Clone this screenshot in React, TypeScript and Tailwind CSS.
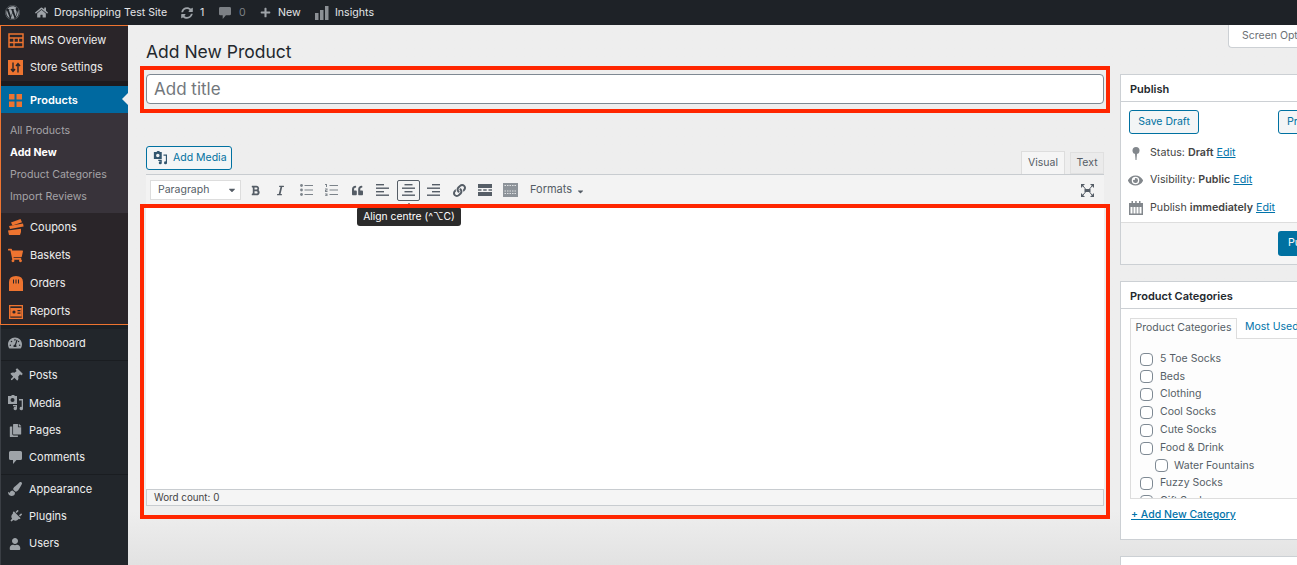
import React from "react";
import {
  FaWordpress, FaHome, FaSyncAlt, FaPlus, FaThumbtack, FaPlug, FaUser, FaPaintBrush, FaCopy,
  FaTachometerAlt, FaQuoteLeft, FaBold, FaItalic, FaLink, FaEye, FaShoppingCart, FaCaretDown,
} from "react-icons/fa";

const ORANGE = "#ee7430";

const TableIcon = () => (
  <svg width="16" height="15" viewBox="0 0 16 15" fill="none" stroke={ORANGE}>
    <rect x="1" y="1" width="14" height="13" strokeWidth="1.5" />
    <path d="M1 5h14M1 9.5h14M6 5v9M10.5 5v4.5" strokeWidth="1.3" />
  </svg>
);
const SlidersIcon = () => (
  <svg width="15" height="15" viewBox="0 0 15 15">
    <rect width="15" height="15" fill={ORANGE} />
    <path d="M5 2.5v9M3 9l2 2.5L7 9M10 12.5v-9M8 6l2-2.5L12 6" stroke="#2a2529" strokeWidth="1.4" fill="none" />
  </svg>
);
const GridIcon = () => (
  <svg width="13" height="13" viewBox="0 0 13 13" fill={ORANGE}>
    <rect width="5.5" height="5.5" />
    <rect x="7.5" width="5.5" height="5.5" />
    <rect y="7.5" width="5.5" height="5.5" />
    <rect x="7.5" y="7.5" width="5.5" height="5.5" />
  </svg>
);
const CouponIcon = () => (
  <svg width="17" height="16" viewBox="0 0 17 16" fill={ORANGE}>
    <path d="M4 3.5 13.5 0l1.5 3.2L5.5 6.5z" />
    <path d="M2 7l14-2.5.6 3L3 10z" />
    <path d="M1 11.5 14 9.8V13l-1 3H2z" />
  </svg>
);
const BagIcon = () => (
  <svg width="14" height="15" viewBox="0 0 14 15" fill={ORANGE}>
    <path d="M0 15V6q0-6 7-6t7 6v9zM4 3.500v4h1v-4zm2.500 0v4h1v-4zm2.500 0v4h1v-4z" fillRule="evenodd" />
  </svg>
);
const ReportIcon = () => (
  <svg width="14" height="14" viewBox="0 0 14 14">
    <rect width="14" height="14" fill={ORANGE} />
    <rect x="1.300" y="1.300" width="11.400" height="11.400" fill="#2a2529" />
    <rect x="1.300" y="3" width="11.400" height="8.500" fill={ORANGE} />
    <circle cx="5" cy="7" r="1.600" fill="#2a2529" />
    <path d="M8.500 5h3v1.200h-3zM8.500 7.500h3v1.200h-3z" fill="#2a2529" />
  </svg>
);
const MediaIcon = ({ color, size = 16 }: { color: string; size?: number }) => (
  <svg width={size} height={size} viewBox="0 0 16 16" fill={color}>
    <path d="M1 1h3l1-1h2l1 1h2v8H1zm4.500 2a2 2 0 1 0 0 4 2 2 0 0 0 0-4z" fillRule="evenodd" />
    <path d="M12 4h4v9.500a1.700 1.700 0 1 1-1.300-1.600V5.500h-2.700zM6 10h4v3.500a1.700 1.700 0 1 1-1.300-1.600v-.6H6z" />
  </svg>
);
const BarsIcon = () => (
  <svg width="14" height="14" viewBox="0 0 14 14" fill="#8c9095">
    <rect y="7" width="3.500" height="7" />
    <rect x="5" y="4" width="3.500" height="10" />
    <rect x="10" y="0" width="3.500" height="14" />
  </svg>
);
const CommentIcon = ({ color, size = 13 }: { color: string; size?: number }) => (
  <svg width={size} height={size} viewBox="0 0 13 13" fill={color}>
    <path d="M1.500 0h10A1.500 1.500 0 0 1 13 1.500v6A1.500 1.500 0 0 1 11.500 9H7.500L4 13V9H1.500A1.500 1.500 0 0 1 0 7.500v-6A1.500 1.500 0 0 1 1.500 0z" />
  </svg>
);
const ListIcon = ({ numbered }: { numbered?: boolean }) => (
  <svg width="13" height="12" viewBox="0 0 13 12" fill="#7c838a">
    <rect x="4.500" y="1" width="8.500" height="1" />
    <rect x="4.500" y="5.500" width="8.500" height="1" />
    <rect x="4.500" y="10" width="8.500" height="1" />
    {numbered ? (
      <path d="M0 0h2v3H1V1H0zM0 4.500h2.500v2H1v.5h1.500v1H0V6h1.500v-.5H0zM0 9.500h2.500V12H0v-.7h1.500v-.3H.6v-.6h.9v-.2H0z" />
    ) : (
      <>
        <circle cx="1.500" cy="1.500" r="1.400" />
        <circle cx="1.500" cy="6" r="1.400" />
        <circle cx="1.500" cy="10.500" r="1.400" />
      </>
    )}
  </svg>
);
// widths of the four lines are the same in all three, only the offset changes
const AlignIcon = ({ side }: { side: "left" | "center" | "right" }) => {
  const shortX = side === "left" ? 0 : side === "center" ? 2.5 : 5;
  return (
    <svg width="13" height="12" viewBox="0 0 13 12" fill="#555d66">
      <rect x={shortX} y="0" width="8" height="1.400" />
      <rect x="0" y="3.500" width="13" height="1.400" />
      <rect x={shortX} y="7" width="8" height="1.400" />
      <rect x="0" y="10.500" width="13" height="1.400" />
    </svg>
  );
};
const HrIcon = () => (
  <svg width="14" height="12" viewBox="0 0 14 12" fill="#555d66">
    <rect width="14" height="4" />
    <rect y="5.300" width="3.500" height="1.400" />
    <rect x="5.200" y="5.300" width="3.500" height="1.400" />
    <rect x="10.500" y="5.300" width="3.500" height="1.400" />
    <rect y="8" width="14" height="4" />
  </svg>
);
const KitchenIcon = () => (
  <svg width="15" height="14" viewBox="0 0 15 14">
    <rect width="15" height="14" fill="#8d9399" />
    <path d="M1.500 2.500h12M1.500 8h12M1.500 10.500h12" stroke="#dfe1e3" strokeDasharray="1.500 1" />
  </svg>
);
const FullscreenIcon = () => (
  <svg width="13" height="13" viewBox="0 0 13 13" fill="#555d66">
    <path d="M0 0h4L0 4zM13 0v4L9 0zM0 13V9l4 4zM13 13H9l4-4z" />
    <rect x="3.500" y="5" width="6" height="3" />
    <path d="M2 2l2.500 3M11 2 8.500 5M2 11l2.500-3M11 11 8.500 8" stroke="#555d66" />
  </svg>
);
const CalendarIcon = () => (
  <svg width="14" height="14" viewBox="0 0 14 14" fill="#82878c">
    <path d="M0 2h2.500V0H4v2h2.200V0h1.500v2H10V0h1.500v2H14v12H0zm1.500 4v6.500h2V6zm3 0v6.500h2V6zm3 0v6.500h2V6zm3 0v6.500h2V6z" fillRule="evenodd" />
  </svg>
);
const PinIcon = () => (
  <svg width="8" height="13" viewBox="0 0 8 13" fill="#82878c">
    <circle cx="4" cy="3.500" r="3.500" />
    <path d="M3 6h2l-.5 7h-1z" />
  </svg>
);

type RowProps = { icon: React.ReactNode; label: string; h: string; top?: boolean };

const MenuRow = ({ icon, label, h, top }: RowProps) => (
  <div className={`flex items-center ${h}`}>
    <div className={`flex shrink-0 items-center justify-center ${top ? "w-[29px]" : "w-[28px]"}`}>{icon}</div>
    <span className="text-[11px] text-[#eeeeee]">{label}</span>
  </div>
);

const G = "#9ea3a8";
const editorTools = [
  <FaBold key="b" size={11} color="#555d66" />,
  <FaItalic key="i" size={11} color="#555d66" />,
  <ListIcon key="ul" />,
  <ListIcon key="ol" numbered />,
  <FaQuoteLeft key="q" size={11} color="#555d66" />,
  <AlignIcon key="l" side="left" />,
  <AlignIcon key="c" side="center" />,
  <AlignIcon key="r" side="right" />,
  <FaLink key="a" size={13} color="#555d66" />,
  <HrIcon key="h" />,
  <KitchenIcon key="k" />,
];

const categories = [
  { name: "5 Toe Socks", h: "h-[18px]" },
  { name: "Beds", h: "h-[17px]" },
  { name: "Clothing", h: "h-[18px]" },
  { name: "Cool Socks", h: "h-[18px]" },
  { name: "Cute Socks", h: "h-[18px]" },
  { name: "Food & Drink", h: "h-[18px]" },
  { name: "Water Fountains", h: "h-[17px]", nested: true },
  { name: "Fuzzy Socks", h: "h-[18px]" },
  { name: "Gift Socks", h: "h-[18px]" },
];

export default function App() {
  return (
    <div className="relative h-[565px] w-[1297px] overflow-hidden bg-[#eeeeee] font-['Inter',sans-serif]">
      {/* admin bar */}
      <div className="flex h-[25px] items-center bg-[#1e2227] text-[10.6px] text-[#e4e6e8]">
        <FaWordpress size={15} color={G} className="ml-[5px]" />
        <FaHome size={13} color={G} className="ml-[15px]" />
        <span className="ml-[6px] w-[113px] whitespace-nowrap">Dropshipping Test Site</span>
        <FaSyncAlt size={12} color={G} className="ml-[14px]" />
        <span className="ml-[7px] w-[5px]">1</span>
        <span className="ml-[14px]"><CommentIcon color="#7c8085" size={12} /></span>
        <span className="ml-[8px] w-[7px] text-[#7c8085]">0</span>
        <FaPlus size={11} color={G} className="ml-[14px]" />
        <span className="ml-[7px] w-[21px]">New</span>
        <span className="ml-[16px]"><BarsIcon /></span>
        <span className="ml-[6px]">Insights</span>
      </div>

      <div className="flex h-[540px] bg-linear-to-b from-[#eeeeee] from-[90%] to-[#e2e2e2]">
        {/* sidebar */}
        <aside className="flex w-[128px] shrink-0 flex-col bg-[#22262b]">
          <div className="border-t border-l border-[#ee7430] bg-[#2a2529]">
            <div className="h-px" />
            <MenuRow top h="h-[27px]" icon={<TableIcon />} label="RMS Overview" />
            <MenuRow top h="h-[27px]" icon={<SlidersIcon />} label="Store Settings" />
          </div>
          <div className="h-[5px] border-l border-[#ee7430] bg-[#1e1b1e]" />
          <div className="relative flex h-[27px] items-center border-l border-[#ee7430] bg-[#0069a0] pt-[2px]">
            <div className="flex w-[29px] shrink-0 justify-center"><GridIcon /></div>
            <span className="text-[11px] font-semibold text-white">Products</span>
            <div className="absolute top-[7px] right-0 h-0 w-0 border-y-[6px] border-r-[6px] border-y-transparent border-r-[#eeeeee]" />
          </div>
          <div className="flex h-[100px] flex-col justify-center border-l border-[#ee7430] bg-[#38333a] pt-[2px] pl-[9px] text-[10.6px] text-[#a5a3a7]">
            <div className="flex h-[22px] items-center">All Products</div>
            <div className="flex h-[22px] items-center font-bold text-white">Add New</div>
            <div className="flex h-[22px] items-center">Product Categories</div>
            <div className="flex h-[22px] items-center">Import Reviews</div>
          </div>
          <div className="border-b border-l border-[#ee7430] bg-[#2a2529]">
            <MenuRow top h="h-[28px]" icon={<CouponIcon />} label="Coupons" />
            <MenuRow top h="h-[28px]" icon={<FaShoppingCart size={15} color={ORANGE} />} label="Baskets" />
            <MenuRow top h="h-[28px]" icon={<BagIcon />} label="Orders" />
            <MenuRow top h="h-[27px] pt-[2px]" icon={<ReportIcon />} label="Reports" />
          </div>
          <div className="flex-1 border-l border-[#3a3e44]">
            <div className="h-[4px] bg-[#1c2024]" />
            <MenuRow h="h-[28px]" icon={<FaTachometerAlt size={14} color={G} />} label="Dashboard" />
            <div className="h-[4px] border-b border-[#1a1d21]" />
            <MenuRow h="h-[28px]" icon={<FaThumbtack size={13} color={G} className="rotate-45" />} label="Posts" />
            <MenuRow h="h-[28px]" icon={<MediaIcon color={G} />} label="Media" />
            <MenuRow h="h-[27px]" icon={<FaCopy size={13} color={G} />} label="Pages" />
            <MenuRow h="h-[27px]" icon={<CommentIcon color={G} />} label="Comments" />
            <div className="h-[4px] border-b border-[#1a1d21]" />
            <MenuRow h="h-[28px]" icon={<FaPaintBrush size={14} color={G} />} label="Appearance" />
            <MenuRow h="h-[27px]" icon={<FaPlug size={13} color={G} className="rotate-45" />} label="Plugins" />
            <MenuRow h="h-[27px]" icon={<FaUser size={12} color={G} />} label="Users" />
          </div>
        </aside>

        {/* main column */}
        <main className="w-[976px] shrink-0 pl-[18px]">
          <h1 className="flex h-[49px] items-center pt-[5px] text-[17.5px] leading-none font-normal text-[#23282d]">Add New Product</h1>
          <div className="flex h-[30px] w-[958px] items-center rounded border border-[#7e8993] bg-white px-[7px] pt-[2px] text-[17px] text-[#72777c]">Add title</div>

          <div className="mt-[42px] flex h-[28px] w-[958px] items-start justify-between">
            <div className="flex h-[24px] w-[86px] items-center rounded-[3px] border border-[#0071a1] bg-[#f3f5f6] pl-[6px] text-[10.5px] text-[#0071a1]">
              <MediaIcon color="#32566f" size={14} />
              <span className="ml-[6px]">Add Media</span>
            </div>
            <div className="mt-[5px] flex h-[23px] items-end gap-[5px] text-[10.5px] text-[#555d66]">
              <div className="flex h-[23px] w-[44px] items-center justify-center border border-b-0 border-[#dddddd] bg-[#f5f5f5]">Visual</div>
              <div className="flex h-[22px] w-[34px] items-center justify-center border border-[#e0e0e0] bg-[#ebebeb]">Text</div>
            </div>
          </div>
          <div className="flex h-[31px] w-[958px] items-center border-t border-[#c8ccd0] bg-[#f3f3f3] pl-[4px]">
            <div className="flex h-[20px] w-[91px] shrink-0 items-center justify-between border border-[#dddddd] bg-white pr-[3px] pl-[7px] text-[10.5px] text-[#555d66]">
              Paragraph
              <FaCaretDown size={10} color="#555d66" />
            </div>
            <div className="ml-[1.5px] flex">
              {editorTools.map((tool, index) => (
                <div key={index} className="flex h-[21px] w-[25.5px] items-center justify-center">
                  <div className={`flex h-[21px] w-[23px] items-center justify-center rounded-[2px] ${index === 6 ? "border border-[#555d66]" : ""}`}>{tool}</div>
                </div>
              ))}
            </div>
            <span className="mb-[2px] ml-[7px] text-[11px] text-[#555d66]">Formats</span>
            <FaCaretDown size={9} color="#555d66" className="mt-[2px] ml-[4px]" />
            <div className="mr-[10px] ml-auto"><FullscreenIcon /></div>
          </div>
          <div className="h-[284px] w-[958px] bg-white" />
          <div className="flex h-[17px] w-[958px] items-center border border-[#c8ccd0] bg-[#f5f5f5] pt-[2px] pl-[7px] text-[9.8px] text-[#444444]">Word count: 0</div>
        </main>

        {/* side column */}
        <div className="w-[193px] shrink-0 overflow-hidden pt-[49px] pl-[16px] text-[10.7px] text-[#444444]">
          <section className="h-[191px] w-[200px] border border-[#ccd0d4] bg-white">
            <div className="flex h-[27px] items-center border-b border-[#ccd0d4] pt-[2px] pl-[9px] text-[11px] font-semibold text-[#23282d]">Publish</div>
            <div className="flex pt-[8px] pl-[8px]">
              <div className="flex h-[24px] w-[70px] shrink-0 items-center justify-center rounded-[3px] border border-[#0071a1] bg-[#f3f5f6] text-[10.5px] text-[#0071a1]">Save Draft</div>
              <div className="ml-[79px] flex h-[24px] w-[70px] shrink-0 items-center rounded-[3px] border border-[#0071a1] bg-[#f3f5f6] pl-[8px] text-[#0071a1]">Preview</div>
            </div>
            <div className="mt-[6px] flex h-[27px] items-center pl-[11px]">
              <PinIcon />
              <span className="ml-[10px]">Status: <b className="font-semibold">Draft</b> <u className="text-[#0073aa]">Edit</u></span>
            </div>
            <div className="flex h-[27px] items-center pl-[7px]">
              <FaEye size={15} color="#82878c" />
              <span className="ml-[7px]">Visibility: <b className="font-semibold">Public</b> <u className="text-[#0073aa]">Edit</u></span>
            </div>
            <div className="flex h-[28px] items-center pl-[8px]">
              <CalendarIcon />
              <span className="ml-[7px]">Publish <b className="font-semibold">immediately</b> <u className="text-[#0073aa]">Edit</u></span>
            </div>
            <div className="h-[42px] border-t border-[#dddddd] bg-[#f5f5f5] pt-[8px] pl-[157px]">
              <div className="flex h-[25px] w-[70px] items-center rounded-[3px] bg-[#0071a1] pl-[10px] text-white">Publish</div>
            </div>
          </section>

          <section className="mt-[16px] h-[259px] w-[200px] border border-[#ccd0d4] bg-white">
            <div className="flex h-[27px] items-center border-b border-[#ccd0d4] pt-[2px] pl-[9px] text-[11px] font-semibold text-[#23282d]">Product Categories</div>
            <div className="mt-[9px] flex pl-[9px]">
              <div className="relative z-10 -mb-px flex h-[21px] w-[107px] items-center justify-center border border-b-0 border-[#dddddd] bg-[#fdfdfd] pb-[2px] text-[10.5px] text-[#555d66]">Product Categories</div>
              <div className="ml-[8px] flex items-center whitespace-nowrap pb-[2px] text-[10.5px] text-[#0073aa]">Most Used</div>
            </div>
            <div className="ml-[9px] h-[161px] overflow-hidden border border-[#dddddd] bg-[#fdfdfd] pt-[11px] text-[10.5px]">
              {categories.map((category) => (
                <div key={category.name} className={`flex items-center ${category.h} ${category.nested ? "gap-[6px] pl-[24px]" : "gap-[7px] pl-[9px]"}`}>
                  <div className="h-[13px] w-[13px] shrink-0 rounded-[4px] border border-[#7e8993] bg-white" />
                  <span className="whitespace-nowrap text-[#555d66]">{category.name}</span>
                </div>
              ))}
            </div>
            <div className="mt-[8px] pl-[10px] text-[10.5px] font-medium text-[#0073aa] underline">+ Add New Category</div>
          </section>

          <section className="mt-[16px] h-[40px] w-[200px] border border-[#ccd0d4] bg-white" />
        </div>
      </div>

      {/* screen options tab */}
      <div className="absolute top-[25px] left-[1228px] flex h-[23px] w-[80px] items-center rounded-bl border-b border-l border-[#ccd0d4] bg-white pl-[13px] text-[10.5px] whitespace-nowrap text-[#6b7075]">Screen Options</div>

      {/* tooltip */}
      <div className="absolute top-[207px] left-[357px] flex h-[19px] w-[104px] items-center justify-center rounded-[3px] bg-[#2b2b2b] text-[10.3px] text-white">Align centre (^⌥C)</div>
      <div className="absolute top-[203px] left-[405px] h-0 w-0 border-x-[4px] border-b-[4px] border-x-transparent border-b-[#2b2b2b]" />

      {/* annotation boxes */}
      <div className="absolute top-[66px] left-[140px] h-[47px] w-[970px] border-4 border-[#ff2600]" />
      <div className="absolute top-[204px] left-[140px] h-[315px] w-[970px] border-4 border-[#ff2600]" />
    </div>
  );
}
